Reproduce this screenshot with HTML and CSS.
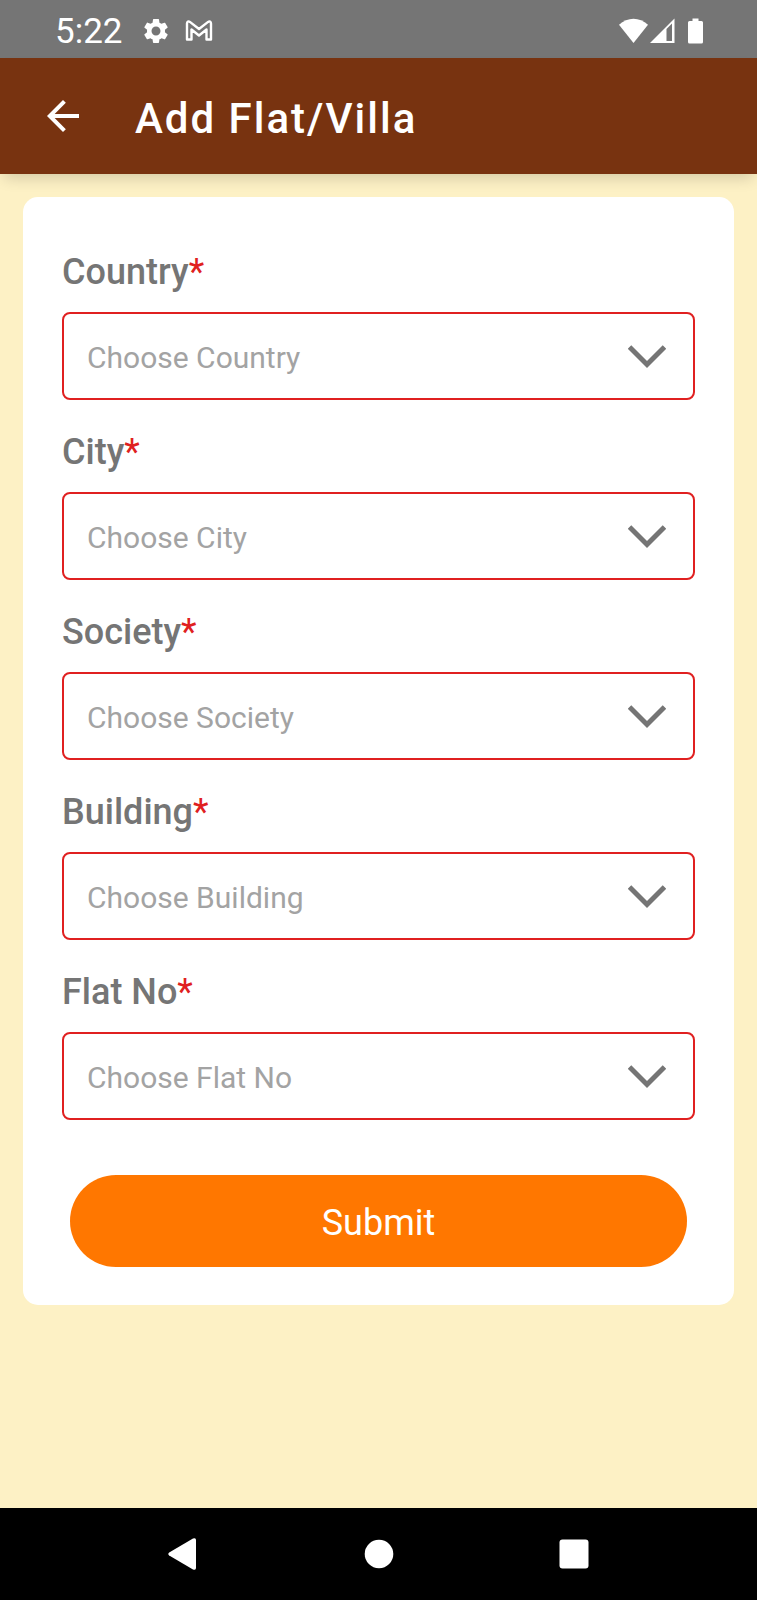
FILE: index.html
```html
<!DOCTYPE html>
<html lang="en">
  <head>
    <meta charset="UTF-8">
    <meta name="viewport" content="width=device-width, initial-scale=1">
    <title>Add Flat/Villa</title>
    <link rel="stylesheet" href="styles.css">
  </head>
  <body>
    <div class="status-bar">
      <span class="time">5:22</span>
      <svg class="gear" width="30" height="30" viewBox="0 0 24 24" fill="#fff">
        <path d="M19.14 12.94c.04-.3.06-.61.06-.94 0-.32-.02-.64-.07-.94l2.03-1.58c.18-.14.23-.41.12-.61l-1.92-3.32c-.12-.22-.37-.29-.59-.22l-2.39.96c-.5-.38-1.03-.7-1.62-.94l-.36-2.54c-.04-.24-.24-.41-.48-.41h-3.84c-.24 0-.43.17-.47.41l-.36 2.54c-.59.24-1.13.57-1.62.94l-2.39-.96c-.22-.08-.47 0-.59.22L2.74 8.87c-.12.21-.08.47.12.61l2.03 1.58c-.05.3-.09.63-.09.94s.02.64.07.94l-2.03 1.58c-.18.14-.23.41-.12.61l1.92 3.32c.12.22.37.29.59.22l2.39-.96c.5.38 1.03.7 1.62.94l.36 2.54c.05.24.24.41.48.41h3.84c.24 0 .44-.17.47-.41l.36-2.54c.59-.24 1.13-.56 1.62-.94l2.39.96c.22.08.47 0 .59-.22l1.92-3.32c.12-.22.07-.47-.12-.61l-2.01-1.58zM12 15.6c-1.98 0-3.6-1.62-3.6-3.6s1.62-3.6 3.6-3.6 3.6 1.62 3.6 3.6-1.62 3.6-3.6 3.6z"/>
      </svg>
      <svg width="28" height="22" viewBox="0 0 28 22" fill="none" stroke="#fff" stroke-width="2.400" stroke-linejoin="round">
        <path d="M2 19.500V3.500C2 1.500 3.500 .9 4.900 1.900L14 9 23.100 1.900C24.500 .9 26 1.500 26 3.500V19.500H21.500V9.500L14 15.500 6.500 9.500V19.500Z"/>
      </svg>
      <div class="status-right">
        <svg width="29" height="26" viewBox="0 0 29 26" fill="#fff">
          <path d="M0 6.800C8.500-1.300 20.500-1.300 29 6.800L14.500 25Z"/>
        </svg>
        <svg width="25" height="26" viewBox="0 0 25 26">
          <path d="M0 25L24.500 0.500V25Z" fill="#fff"/>
          <path d="M16.500 11L22 5.500V23H16.500Z" fill="#757575"/>
        </svg>
        <svg class="battery" width="15" height="26" viewBox="0 0 15 26" fill="#fff">
          <path d="M4.500 0.500H10.500V3H13.500Q15 3 15 4.500V24Q15 25.500 13.500 25.500H1.500Q0 25.500 0 24V4.500Q0 3 1.500 3H4.500Z"/>
        </svg>
      </div>
    </div>

    <header class="app-bar">
      <button class="back" type="button" aria-label="Back">
        <svg width="48" height="48" viewBox="0 0 24 24" fill="#fff">
          <path d="M20 11H7.830l5.590-5.590L12 4l-8 8 8 8 1.410-1.410L7.830 13H20v-2z"/>
        </svg>
      </button>
      <h1>Add Flat/Villa</h1>
    </header>

    <main>
      <form class="card">
        <div class="field">
          <label for="country">Country<span class="required">*</span></label>
          <div class="select-box">
            <select id="country" required>
              <option value="">Choose Country</option>
            </select>
            <svg class="chevron" width="38" height="24" viewBox="0 0 38 24"><path d="M1.500 2L19 19.500 36.500 2"/></svg>
          </div>
        </div>
        <div class="field">
          <label for="city">City<span class="required">*</span></label>
          <div class="select-box">
            <select id="city" required>
              <option value="">Choose City</option>
            </select>
            <svg class="chevron" width="38" height="24" viewBox="0 0 38 24"><path d="M1.500 2L19 19.500 36.500 2"/></svg>
          </div>
        </div>
        <div class="field">
          <label for="society">Society<span class="required">*</span></label>
          <div class="select-box">
            <select id="society" required>
              <option value="">Choose Society</option>
            </select>
            <svg class="chevron" width="38" height="24" viewBox="0 0 38 24"><path d="M1.500 2L19 19.500 36.500 2"/></svg>
          </div>
        </div>
        <div class="field">
          <label for="building">Building<span class="required">*</span></label>
          <div class="select-box">
            <select id="building" required>
              <option value="">Choose Building</option>
            </select>
            <svg class="chevron" width="38" height="24" viewBox="0 0 38 24"><path d="M1.500 2L19 19.500 36.500 2"/></svg>
          </div>
        </div>
        <div class="field">
          <label for="flat">Flat No<span class="required">*</span></label>
          <div class="select-box">
            <select id="flat" required>
              <option value="">Choose Flat No</option>
            </select>
            <svg class="chevron" width="38" height="24" viewBox="0 0 38 24"><path d="M1.500 2L19 19.500 36.500 2"/></svg>
          </div>
        </div>
        <button class="submit" type="submit">Submit</button>
      </form>
    </main>

    <nav class="nav-bar">
      <button type="button" aria-label="Back">
        <svg width="32" height="32" viewBox="0 0 32 32" fill="#fff">
          <path d="M1.200 14.600L25 .6Q28 -.6 28 2V30Q28 32.600 25 31.400L1.200 17.400Q-.6 16 1.200 14.600Z"/>
        </svg>
      </button>
      <button type="button" aria-label="Home">
        <svg width="30" height="30" viewBox="0 0 30 30" fill="#fff"><circle cx="15" cy="15" r="14.300"/></svg>
      </button>
      <button type="button" aria-label="Recent apps">
        <svg width="30" height="30" viewBox="0 0 30 30" fill="#fff"><rect x="0.500" y="0.500" width="29" height="29" rx="3"/></svg>
      </button>
    </nav>
  </body>
</html>
```
FILE: styles.css
```css
* {
  box-sizing: border-box;
}

body {
  font-family: Roboto, sans-serif;
  background-color: #fdf1c5;
  margin: 0;
  min-height: 100vh;
  display: flex;
  flex-direction: column;
}

svg {
  display: block;
}

button {
  font-family: inherit;
  border: none;
  background: none;
  padding: 0;
  cursor: pointer;
}

.status-bar {
  height: 58px;
  padding: 3px 54px 0 55px;
  background-color: #757575;
  color: white;
  display: flex;
  align-items: center;
}

.time {
  font-size: 35px;
  line-height: 42px;
  padding-top: 2px;
}

.gear {
  margin: 0 14px 0 18px;
}

.status-right {
  margin-left: auto;
  display: flex;
  gap: 2px;
}

.battery {
  margin-left: 11px;
}

.app-bar {
  height: 116px;
  padding: 0 39px;
  background-color: #783310;
  box-shadow: 0 8px 14px -4px rgba(0, 0, 0, 0.16);
  display: flex;
  align-items: center;
  gap: 48px;
}

h1 {
  margin: 0;
  padding-top: 6px;
  color: white;
  font-size: 42px;
  font-weight: 500;
  line-height: 48px;
  letter-spacing: 2px;
}

main {
  flex: 1;
  padding: 23px;
}

.card {
  background: white;
  border-radius: 15px;
  padding: 54px 39px 38px;
}

.field {
  margin-bottom: 31px;
}

.field label {
  display: block;
  margin-bottom: 19px;
  color: #757575;
  font-size: 36px;
  font-weight: 500;
  line-height: 42px;
}

.field .required {
  color: #e02020;
  font-weight: 400;
}

.select-box {
  position: relative;
}

select {
  display: block;
  width: 100%;
  height: 88px;
  padding: 3px 80px 0 23px;
  appearance: none;
  background: white;
  border: 2px solid #e02020;
  border-radius: 8px;
  color: #a3a3a3;
  font-family: inherit;
  font-size: 30px;
}

.chevron {
  position: absolute;
  top: 33px;
  right: 29px;
  fill: none;
  stroke: #757575;
  stroke-width: 5px;
  pointer-events: none;
}

.submit {
  display: block;
  width: calc(100% - 16px);
  height: 92px;
  margin: 55px auto 0;
  padding-top: 4px;
  border-radius: 46px;
  background-color: #ff7700;
  color: white;
  font-size: 36px;
}

.nav-bar {
  height: 92px;
  padding: 0 86px;
  background-color: black;
  display: flex;
}

.nav-bar button {
  flex: 1;
  display: flex;
  align-items: center;
  justify-content: center;
}
```
